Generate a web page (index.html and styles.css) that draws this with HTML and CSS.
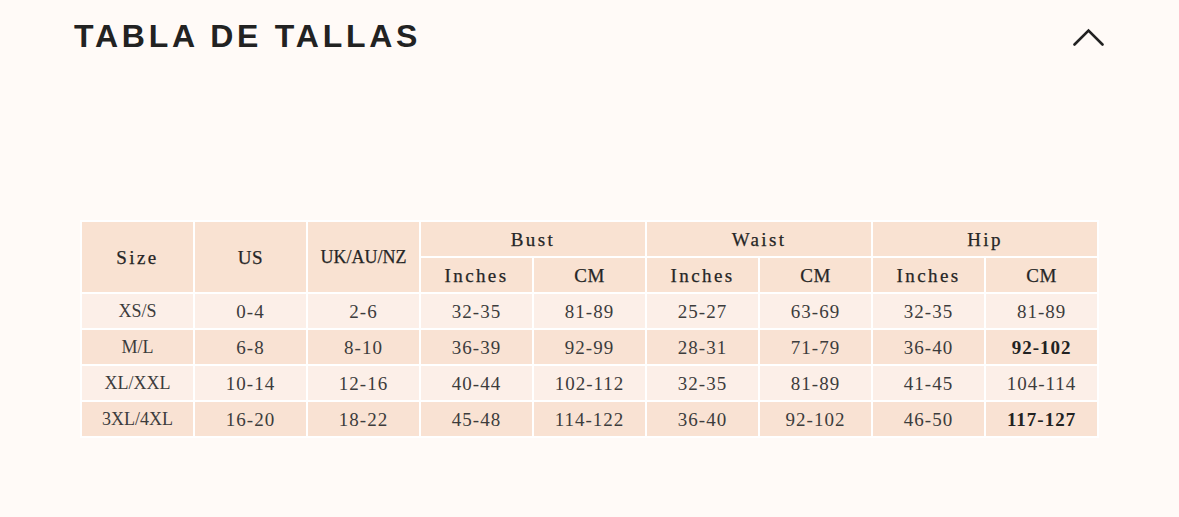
FILE: index.html
```html
<!DOCTYPE html>
<html lang="es">
<head>
<meta charset="utf-8">
<title>Tabla de tallas</title>
<link rel="stylesheet" href="styles.css">
</head>
<body>
<section class="accordion">
  <div class="acc-head">
    <h2 class="acc-title">TABLA DE TALLAS</h2>
    <svg class="chev" width="31" height="18" viewBox="0 0 31 18" aria-hidden="true">
      <polyline points="1.5,16.5 15.5,2.5 29.5,16.5" fill="none" stroke="#222" stroke-width="2.6" stroke-linecap="round" stroke-linejoin="miter"/>
    </svg>
  </div>
  <div class="acc-body">
    <table class="sizes">
      <colgroup>
        <col class="c"><col class="c"><col class="c"><col class="c"><col class="c"><col class="c"><col class="c"><col class="c"><col class="c">
      </colgroup>
      <thead>
        <tr>
          <th rowspan="2" class="sp">Size</th>
          <th rowspan="2">US</th>
          <th rowspan="2" class="nar">UK/AU/NZ</th>
          <th colspan="2" class="sp">Bust</th>
          <th colspan="2" class="sp">Waist</th>
          <th colspan="2" class="sp">Hip</th>
        </tr>
        <tr>
          <th class="sp">Inches</th><th>CM</th>
          <th class="sp">Inches</th><th>CM</th>
          <th class="sp">Inches</th><th>CM</th>
        </tr>
      </thead>
      <tbody>
        <tr class="light">
          <td class="sz">XS/S</td><td>0-4</td><td>2-6</td><td>32-35</td><td>81-89</td><td>25-27</td><td>63-69</td><td>32-35</td><td>81-89</td>
        </tr>
        <tr class="dark">
          <td class="sz">M/L</td><td>6-8</td><td>8-10</td><td>36-39</td><td>92-99</td><td>28-31</td><td>71-79</td><td>36-40</td><td class="b">92-102</td>
        </tr>
        <tr class="light">
          <td class="sz">XL/XXL</td><td>10-14</td><td>12-16</td><td>40-44</td><td>102-112</td><td>32-35</td><td>81-89</td><td>41-45</td><td>104-114</td>
        </tr>
        <tr class="dark">
          <td class="sz">3XL/4XL</td><td>16-20</td><td>18-22</td><td>45-48</td><td>114-122</td><td>36-40</td><td>92-102</td><td>46-50</td><td class="b">117-127</td>
        </tr>
      </tbody>
    </table>
  </div>
</section>
</body>
</html>
```

FILE: styles.css
```css
html, body {
  margin: 0;
  padding: 0;
  background: #fffaf7;
}

.accordion {
  width: 1179px;
}

.acc-head {
  display: flex;
  justify-content: space-between;
  align-items: flex-start;
  padding: 20px 75px 0 74px;
}

.acc-title {
  margin: 0;
  font-family: "Liberation Sans", Arial, sans-serif;
  font-weight: 700;
  font-size: 32px;
  line-height: 32px;
  letter-spacing: 3.75px;
  color: #222;
}

.chev {
  display: block;
  margin-top: 8px;
}

.acc-body {
  padding: 168px 0 0 80px;
}

.sizes {
  border-collapse: separate;
  border-spacing: 2px;
  background: #ffffff;
  table-layout: fixed;
  width: 1019px;
}

.sizes col.c {
  width: 111px;
}

.sizes th,
.sizes td {
  height: 33px;
  padding: 1px 0 0;
  text-align: center;
  vertical-align: middle;
}

.sizes th {
  background: #f9e2d2;
  color: #262626;
  font-weight: 400;
  font-family: "Liberation Serif", "Times New Roman", serif;
  font-size: 19px;
  letter-spacing: 0.5px;
  -webkit-text-stroke: 0.25px #262626;
}

.sizes th.sp {
  letter-spacing: 2.4px;
}

.sizes th.nar {
  font-size: 18px;
  letter-spacing: 0;
}

.sizes td {
  font-family: "Liberation Serif", "Times New Roman", serif;
  font-size: 19px;
  letter-spacing: 1px;
  color: #3c3c3c;
}

.sizes td.sz {
  font-size: 18px;
  letter-spacing: 0;
}

.sizes tr.light td {
  background: #fcefe8;
}

.sizes tr.dark td {
  background: #f9e2d3;
}

.sizes td.b {
  font-weight: 700;
  color: #222;
}
```
